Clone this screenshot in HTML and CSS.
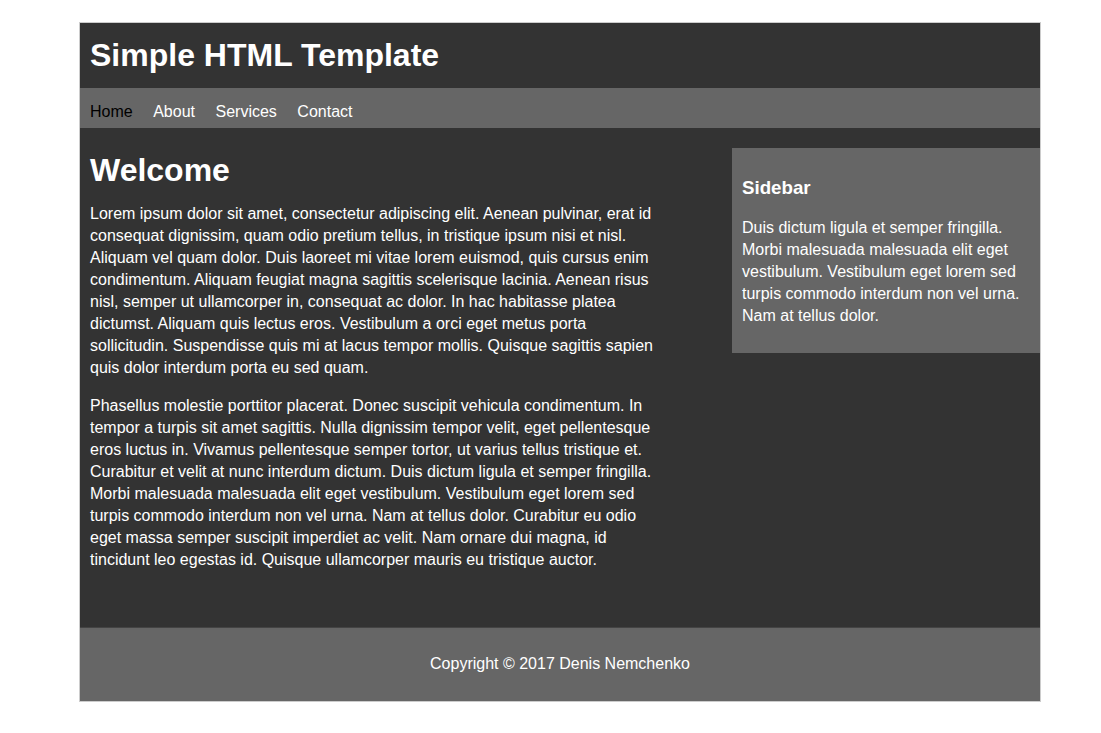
FILE: index.html
```html
<!DOCTYPE html>
<html lang="en">
<head>
<meta charset="utf-8">
<title>Simple HTML Template</title>
<link rel="stylesheet" href="styles.css">
</head>
<body>
<div class="wrap">
  <header class="header">
    <h1 class="title">Simple HTML Template</h1>
  </header>
  <nav class="nav">
    <a class="nav-link active" href="#">Home</a>
    <a class="nav-link" href="#">About</a>
    <a class="nav-link" href="#">Services</a>
    <a class="nav-link" href="#">Contact</a>
  </nav>
  <div class="row">
    <main class="main">
      <h2 class="main-title">Welcome</h2>
      <p class="text">Lorem ipsum dolor sit amet, consectetur adipiscing elit. Aenean pulvinar, erat id consequat dignissim, quam odio pretium tellus, in tristique ipsum nisi et nisl. Aliquam vel quam dolor. Duis laoreet mi vitae lorem euismod, quis cursus enim condimentum. Aliquam feugiat magna sagittis scelerisque lacinia. Aenean risus nisl, semper ut ullamcorper in, consequat ac dolor. In hac habitasse platea dictumst. Aliquam quis lectus eros. Vestibulum a orci eget metus porta sollicitudin. Suspendisse quis mi at lacus tempor mollis. Quisque sagittis sapien quis dolor interdum porta eu sed quam.</p>
      <p class="text">Phasellus molestie porttitor placerat. Donec suscipit vehicula condimentum. In tempor a turpis sit amet sagittis. Nulla dignissim tempor velit, eget pellentesque eros luctus in. Vivamus pellentesque semper tortor, ut varius tellus tristique et. Curabitur et velit at nunc interdum dictum. Duis dictum ligula et semper fringilla. Morbi malesuada malesuada elit eget vestibulum. Vestibulum eget lorem sed turpis commodo interdum non vel urna. Nam at tellus dolor. Curabitur eu odio eget massa semper suscipit imperdiet ac velit. Nam ornare dui magna, id tincidunt leo egestas id. Quisque ullamcorper mauris eu tristique auctor.</p>
    </main>
    <aside class="sidebar">
      <h3 class="sidebar-title">Sidebar</h3>
      <p class="text">Duis dictum ligula et semper fringilla. Morbi malesuada malesuada elit eget vestibulum. Vestibulum eget lorem sed turpis commodo interdum non vel urna. Nam at tellus dolor.</p>
    </aside>
  </div>
  <footer class="footer">Copyright © 2017 Denis Nemchenko</footer>
</div>
</body>
</html>
```
FILE: styles.css
```css
html, body {
  margin: 0;
  padding: 0;
  background: #fff;
}
body {
  font-family: "Liberation Sans", Arial, sans-serif;
  font-size: 16px;
  color: #fff;
}
.wrap {
  width: 960px;
  margin: 22px 0 0 79px;
  border: 1px solid #ccc;
  background: #333;
}
.header {
  padding: 14px 10px 14px;
  background: #333;
}
.title {
  margin: 0;
  font-size: 32px;
  line-height: 37px;
  font-weight: bold;
}
.nav {
  display: flex;
  gap: 20.5px;
  padding: 15px 10px 7px;
  line-height: 18px;
  background: #666;
}
.nav-link {
  color: #fff;
  text-decoration: none;
}
.nav-link.active {
  color: #000;
}
.row {
  display: flex;
  justify-content: space-between;
  align-items: flex-start;
}
.main {
  width: 576px;
  padding: 24px 10px 56px;
}
.main-title {
  margin: 0 0 14px;
  font-size: 32px;
  line-height: 37px;
  font-weight: bold;
}
.text {
  margin: 0 0 16px;
  line-height: 22px;
}
.main .text:last-child {
  margin-bottom: 0;
}
.sidebar {
  width: 288px;
  margin-top: 20px;
  padding: 10px 10px 26px;
  background: #666;
}
.sidebar-title {
  margin: 18.5px 0 19px;
  font-size: 18.72px;
  line-height: 21.5px;
  font-weight: bold;
}
.sidebar .text {
  margin: 0;
}
.footer {
  border-top: 1px solid #444;
  padding: 25px 10px 26px;
  line-height: 22px;
  text-align: center;
  background: #666;
}
```
